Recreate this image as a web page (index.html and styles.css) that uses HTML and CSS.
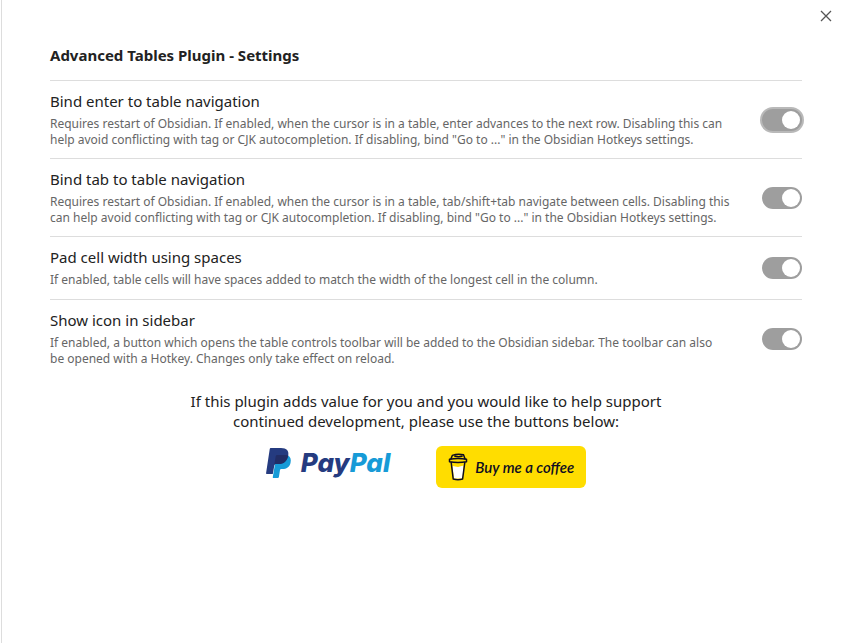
FILE: index.html
```html
<!DOCTYPE html>
<html lang="en">
<head>
<meta charset="utf-8">
<title>Advanced Tables Plugin - Settings</title>
<link rel="stylesheet" href="styles.css">
</head>
<body>
<main class="panel">
  <button class="close" type="button" aria-label="Close">
    <svg width="12" height="12" viewBox="0 0 12 12"><path d="M1 1l10 10M11 1L1 11"/></svg>
  </button>
  <h1 class="title">Advanced Tables Plugin - Settings</h1>
  <div class="setting">
    <div class="info">
      <label class="name" for="enter">Bind enter to table navigation</label>
      <p class="desc">Requires restart of Obsidian. If enabled, when the cursor is in a table, enter advances to the next row. Disabling this can help avoid conflicting with tag or CJK autocompletion. If disabling, bind "Go to ..." in the Obsidian Hotkeys settings.</p>
    </div>
    <input class="toggle toggle-active" id="enter" type="checkbox" checked>
  </div>
  <div class="setting">
    <div class="info">
      <label class="name" for="tab">Bind tab to table navigation</label>
      <p class="desc">Requires restart of Obsidian. If enabled, when the cursor is in a table, tab/shift+tab navigate between cells. Disabling this can help avoid conflicting with tag or CJK autocompletion. If disabling, bind "Go to ..." in the Obsidian Hotkeys settings.</p>
    </div>
    <input class="toggle" id="tab" type="checkbox" checked>
  </div>
  <div class="setting">
    <div class="info">
      <label class="name" for="pad">Pad cell width using spaces</label>
      <p class="desc">If enabled, table cells will have spaces added to match the width of the longest cell in the column.</p>
    </div>
    <input class="toggle" id="pad" type="checkbox" checked>
  </div>
  <div class="setting">
    <div class="info">
      <label class="name" for="icon">Show icon in sidebar</label>
      <p class="desc">If enabled, a button which opens the table controls toolbar will be added to the Obsidian sidebar. The toolbar can also be&nbsp;opened with a Hotkey. Changes only take effect on reload.</p>
    </div>
    <input class="toggle" id="icon" type="checkbox" checked>
  </div>
  <section class="donate">
    <p class="appeal">If this plugin adds value for you and you would like to help support continued development, please use the buttons below:</p>
    <div class="links">
      <a class="paypal" href="#">
        <svg width="26" height="30" viewBox="0 0 26 30">
          <path fill="#179bd7" d="M22 7.500c2.600 1.200 3.300 4 2.500 7.500-1 4.300-4 6-8 6h-1.300c-.7 0-1 .4-1.200 1l-1.100 7c-.1.700-.5 1-1.100 1H7.500c-.6 0-.8-.4-.7-1L9 16z"/>
          <path fill="#253b80" d="M5 0h10c5.800 0 8.200 3 7.200 7.500C21.200 13.500 17.500 16 12.500 16H9.800c-1 0-1.300.6-1.500 1.500L6.800 26H1c-.7 0-1-.4-.9-1L3.700 1.200C3.800.4 4.300 0 5 0z"/>
          <path fill="#222d65" d="M11.500 7h8.500l2.200.5C21.200 13.500 17.500 16 12.500 16H9.800c-1 0-1.300.5-1.600 1.500l1.500-9.300C9.900 7.400 10.600 7 11.500 7z"/>
        </svg>
        <span class="paypal-text"><span class="pay">Pay</span><span class="pal">Pal</span></span>
      </a>
      <a class="coffee" href="#">
        <svg width="20" height="28" viewBox="0 0 20 28" fill="none" stroke="#0d0c22" stroke-width="1.500" stroke-linejoin="round" stroke-linecap="round">
          <path fill="#fff" stroke="none" d="M4.500 13l5.500 1 5.500-1.500L14.500 25.500H6z"/>
          <path d="M3.200 9.500L5.200 26q4.800 1.400 9.400 0L16.800 9.500"/>
          <path d="M1.500 6.200Q10 5 18.500 6.200v2.600Q10 10.200 1.500 8.800z"/>
          <path d="M3 5.800L4.300 2.400Q10 .2 15.500 1.800L17 5.800M7 3.300Q11 4 14 3.200"/>
        </svg>
        <span class="coffee-text">Buy me a coffee</span>
      </a>
    </div>
  </section>
</main>
</body>
</html>
```
FILE: styles.css
```css
* { box-sizing: border-box; }
body {
  margin: 0;
  background: #fff;
  color: #222;
  font-family: "Noto Sans", "Open Sans", sans-serif;
  font-size: 15px;
  line-height: 20px;
}
.panel {
  position: relative;
  min-height: 100vh;
  margin-left: 1px;
  padding: 45px 47px 32px 48px;
  border-left: 1px solid #ddd;
}
.close {
  position: absolute;
  top: 8px;
  right: 15px;
  display: flex;
  padding: 2px;
  border: 0;
  background: none;
}
.close svg { stroke: #555; stroke-width: 1.3; fill: none; }
.title { margin: 0 0 15px; font-size: 15px; line-height: 20px; }
.setting {
  display: flex;
  align-items: center;
  gap: 16px;
  padding: 11px 0;
  border-top: 1px solid #ddd;
}
.info { flex: 1; }
.name { display: block; line-height: 18px; }
.desc { margin: 6px 0 0; color: #666; font-size: 12px; line-height: 1.3; }
.toggle {
  appearance: none;
  display: flex;
  flex: none;
  align-items: center;
  justify-content: flex-end;
  width: 40px;
  height: 22px;
  margin: 0;
  padding: 2px;
  border-radius: 11px;
  background: #9e9e9e;
}
.toggle::before {
  content: "";
  width: 18px;
  height: 18px;
  border-radius: 50%;
  background: #fff;
}
.toggle-active { box-shadow: 0 0 0 2px #b9b9b9; }
.donate { width: 70%; margin: 14px auto 0; text-align: center; }
.appeal { margin: 0; }
.links { display: flex; align-items: center; justify-content: center; gap: 46px; margin-top: 15px; }
.links a { display: flex; align-items: center; text-decoration: none; }
.paypal { gap: 9px; padding-bottom: 8px; }
.paypal-text { font: italic 800 26px/30px Inter, sans-serif; }
.pay { color: #253b80; }
.pal { color: #179bd7; }
.coffee { gap: 7px; height: 42px; padding: 0 12px; border-radius: 6px; background: #fd0; }
.coffee-text { color: #0d0c22; font: italic 600 15px/20px Lato, sans-serif; }
```
